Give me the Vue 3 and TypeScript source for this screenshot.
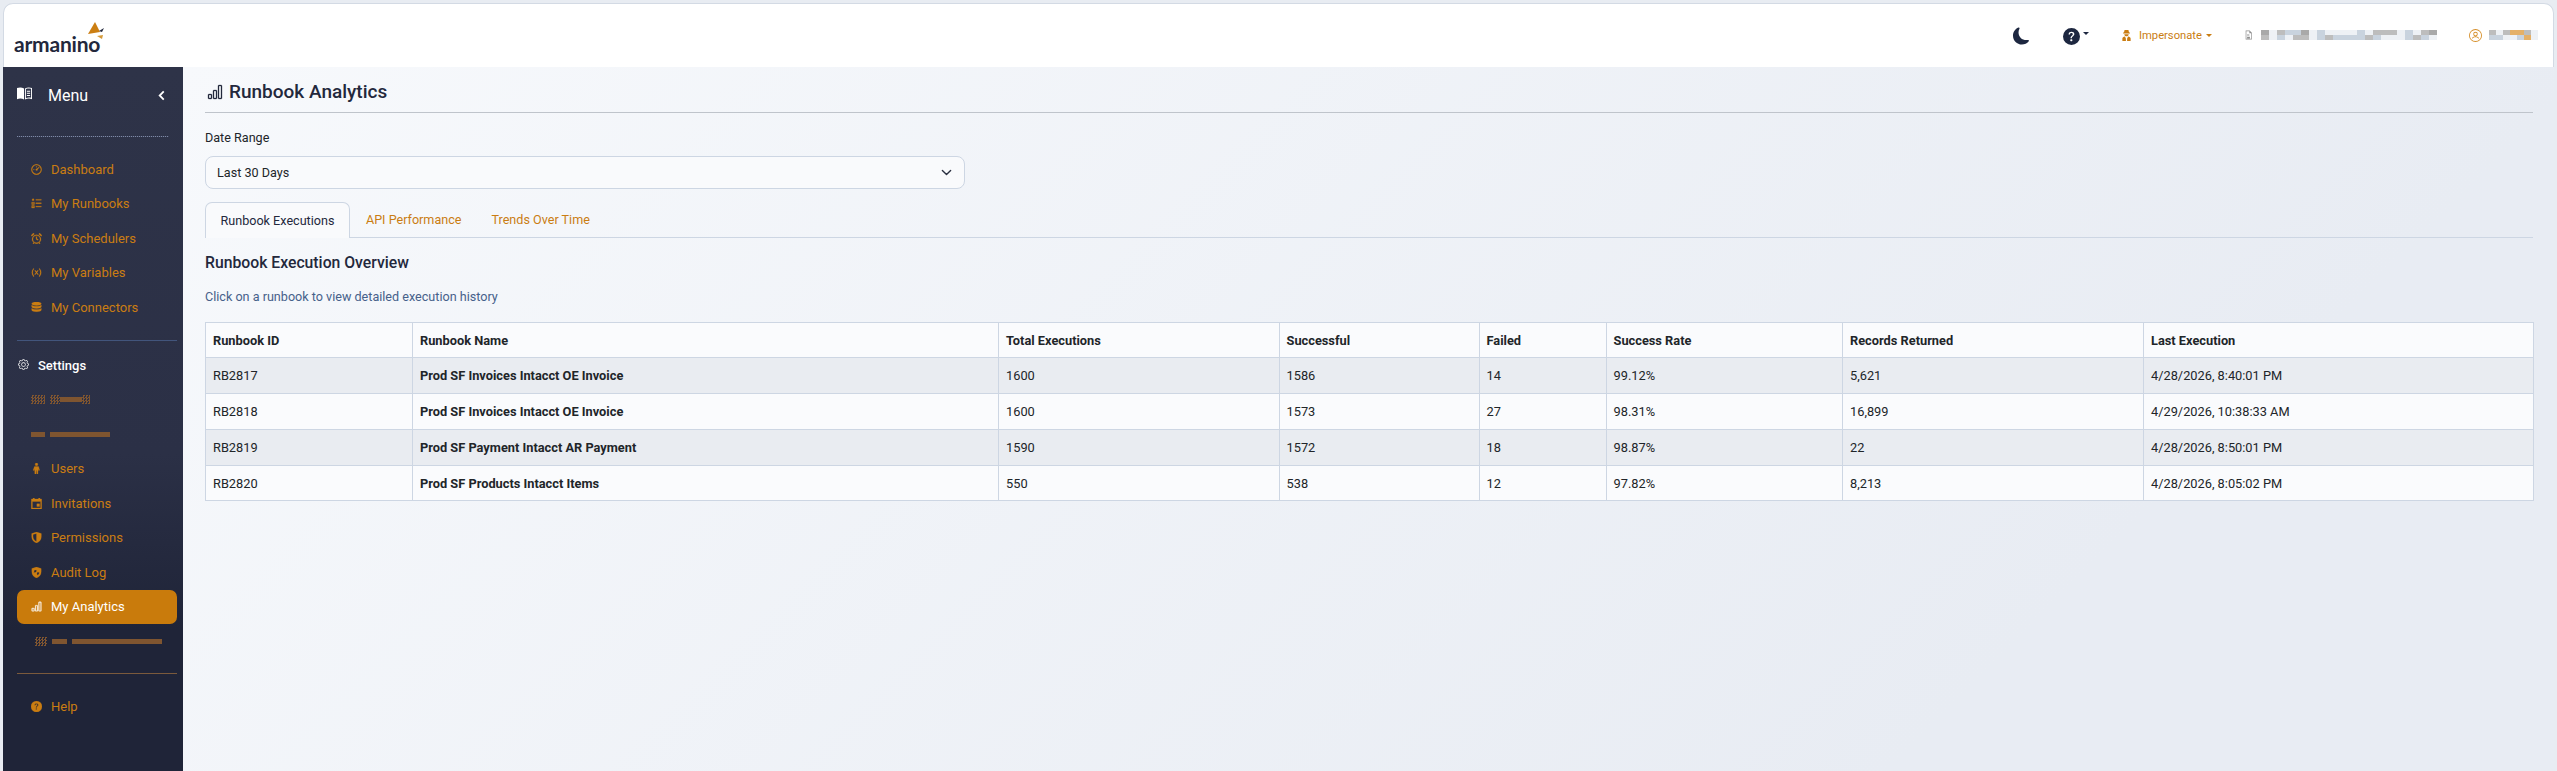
<script setup lang="ts">
interface NavItem {
  label: string
  icon: string
  active?: boolean
}

interface Segment {
  w: number
  kind: 'solid' | 'dither' | 'gap'
}

const barChart =
  'M4 11H2v3h2v-3zm5-4H7v7h2V7zm5-5v12h-2V2h2zm-2-1a1 1 0 0 0-1 1v12a1 1 0 0 0 1 1h2a1 1 0 0 0 1-1V2a1 1 0 0 0-1-1h-2zM6 7a1 1 0 0 1 1-1h2a1 1 0 0 1 1 1v7a1 1 0 0 1-1 1H7a1 1 0 0 1-1-1V7zm-5 4a1 1 0 0 1 1-1h2a1 1 0 0 1 1 1v3a1 1 0 0 1-1 1H2a1 1 0 0 1-1-1v-3z'
const questionFill =
  'M16 8A8 8 0 1 1 0 8a8 8 0 0 1 16 0zM5.496 6.033h.825c.138 0 .248-.113.266-.25.09-.656.54-1.134 1.342-1.134.686 0 1.314.343 1.314 1.168 0 .635-.374.927-.965 1.371-.673.489-1.206 1.06-1.168 1.987l.003.217a.25.25 0 0 0 .25.246h.811a.25.25 0 0 0 .25-.25v-.105c0-.718.273-.927 1.01-1.486.609-.463 1.244-.977 1.244-2.056 0-1.511-1.276-2.241-2.673-2.241-1.267 0-2.655.59-2.75 2.286a.237.237 0 0 0 .241.247zm2.325 6.443c.61 0 1.029-.394 1.029-.927 0-.552-.42-.94-1.029-.94-.584 0-1.009.388-1.009.94 0 .533.425.927 1.01.927z'
const moonFill =
  'M6 .278a.768.768 0 0 1 .08.858 7.208 7.208 0 0 0-.878 3.46c0 4.021 3.278 7.277 7.318 7.277.527 0 1.04-.055 1.533-.16a.787.787 0 0 1 .81.316.733.733 0 0 1-.031.893A8.349 8.349 0 0 1 8.344 16C3.734 16 0 12.286 0 7.71 0 4.266 2.114 1.312 5.124.06A.752.752 0 0 1 6 .278z'
const gear =
  'M8 4.754a3.246 3.246 0 1 0 0 6.492 3.246 3.246 0 0 0 0-6.492zM5.754 8a2.246 2.246 0 1 1 4.492 0 2.246 2.246 0 0 1-4.492 0zM9.796 1.343c-.527-1.79-3.065-1.79-3.592 0l-.094.319a.873.873 0 0 1-1.255.52l-.292-.16c-1.64-.892-3.433.902-2.54 2.541l.159.292a.873.873 0 0 1-.52 1.255l-.319.094c-1.79.527-1.79 3.065 0 3.592l.319.094a.873.873 0 0 1 .52 1.255l-.16.292c-.892 1.64.901 3.434 2.541 2.54l.292-.159a.873.873 0 0 1 1.255.52l.094.319c.527 1.79 3.065 1.79 3.592 0l.094-.319a.873.873 0 0 1 1.255-.52l.292.16c1.64.893 3.434-.902 2.54-2.541l-.159-.292a.873.873 0 0 1 .52-1.255l.319-.094c1.79-.527 1.79-3.065 0-3.592l-.319-.094a.873.873 0 0 1-.52-1.255l.16-.292c.893-1.64-.902-3.433-2.541-2.54l-.292.159a.873.873 0 0 1-1.255-.52l-.094-.319zm-2.633.283c.246-.835 1.428-.835 1.674 0l.094.319a1.873 1.873 0 0 0 2.693 1.115l.291-.16c.764-.415 1.6.42 1.184 1.185l-.159.292a1.873 1.873 0 0 0 1.116 2.692l.318.094c.835.246.835 1.428 0 1.674l-.319.094a1.873 1.873 0 0 0-1.115 2.693l.16.291c.415.764-.42 1.6-1.185 1.184l-.291-.159a1.873 1.873 0 0 0-2.693 1.116l-.094.318c-.246.835-1.428.835-1.674 0l-.094-.319a1.873 1.873 0 0 0-2.692-1.115l-.292.16c-.764.415-1.6-.42-1.184-1.185l.159-.291A1.873 1.873 0 0 0 1.945 8.93l-.319-.094c-.835-.246-.835-1.428 0-1.674l.319-.094A1.873 1.873 0 0 0 3.06 4.377l-.16-.292c-.415-.764.42-1.6 1.185-1.184l.292.159a1.873 1.873 0 0 0 2.692-1.115l.094-.319z'
const dashboard =
  'M8 .5a7.5 7.5 0 1 0 0 15 7.500 7.500 0 0 0 0-15zM1.600 8a6.400 6.400 0 1 1 12.800 0A6.400 6.400 0 0 1 1.600 8zM11.600 4.400l-3 2.600a1.300 1.300 0 1 0 .9 1l2.600-3.100-.5-.5zM3.500 7.500h1.200v1H3.500zM7.500 3.500h1v1.200h-1z'
const tasks =
  'M1.500 2 3 .8 4.500 2v1.500h-3zM1 6h4v3.500H1zm1 1v1.500h2V7zM1 11h4v3.500H1zm1 1v1.500h2V12zM7 2h8v1.200H7zM7 7h8v1.200H7zM7 12h8v1.200H7z'
const alarm =
  'M8 2.500a6.500 6.500 0 0 0-4.200 11.400L2.600 15.200l.9.8 1.300-1.400a6.500 6.500 0 0 0 6.400 0l1.300 1.400.9-.8-1.200-1.300A6.500 6.500 0 0 0 8 2.500zm0 1.300a5.200 5.200 0 1 1 0 10.400A5.200 5.200 0 0 1 8 3.800zM7.400 5.500v3.500l2.600 1.500.6-1L8.600 8.400V5.500zM0 3.500 3.500 0l1.300 1.300L1.300 4.800zM16 3.500 12.500 0l-1.300 1.300 3.500 3.500z'
const variables =
  'M3.600 2C2 4 1.200 6 1.200 8s.8 4 2.400 6l.9-.6C3.100 11.600 2.500 9.800 2.500 8s.6-3.600 2-5.400zM12.400 2l-.9.6c1.400 1.800 2 3.600 2 5.400s-.6 3.600-2 5.400l.9.6c1.600-2 2.400-4 2.400-6s-.8-4-2.400-6zM5.300 5.200l2 2.700-2.200 2.900h1.500L8 8.800l1.400 2h1.500L8.700 7.900l2-2.700H9.200L8 7 6.800 5.200z'
const database =
  'M8 0C4 0 1 1 1 2.500S4 5 8 5s7-1 7-2.500S12 0 8 0zM1 4.500V7c0 1.500 3 2.500 7 2.500S15 8.500 15 7V4.500C14 5.800 11.200 6.300 8 6.300S2 5.800 1 4.500zM1 9.200v2.300C1 13 4 14 8 14s7-1 7-2.500V9.200c-1 1.300-3.800 1.800-7 1.800s-6-.5-7-1.800z'
const person =
  'M8 0a2 2 0 1 1 0 4 2 2 0 0 1 0-4zM5 5.200h6l1.500 5.300-1.400.4-.8-2.400-.3 7.500H8.600L8.300 11h-.6l-.3 5H5.600L5.300 8.500l-.8 2.400-1.400-.4z'
const calendar =
  'M3 0h2v1.500h6V0h2v1.500h2.500V16H.5V1.500H3zM2 5v9.500h12V5zm6.500 3.500h4v4h-4z'
const shieldHalf =
  'M8 0 1 2.300V7c0 4.500 3 7.600 7 9 4-1.400 7-4.500 7-9V2.300zm0 2v11.900C5 12.600 3 10.200 3 7V3.700z'
const shieldGlobe =
  'M8 0 1.200 2.300V7c0 4.500 2.900 7.600 6.800 9 3.900-1.400 6.800-4.500 6.800-9V2.300zM5 4.500h3v2.200L6.200 8H4zm4 3h3l-.3 2.500L9.500 12 8.500 10z'
const bookHalf =
  'M0 2.200C2.200 1.400 5.200 1.300 7.500 2.600V14.300C5.200 13.100 2.200 13.200 0 14zM8.500 2.600C10.800 1.300 13.800 1.400 16 2.200V14c-2.200-.8-5.200-.9-7.500.3zM9.500 3.200v9.700c1.800-.7 3.900-.7 5.500-.3V3c-1.700-.4-3.700-.4-5.500.2zM10.500 5h3.500v1h-3.500zM10.500 7.300h3.500v1h-3.500zM10.500 9.600h3.500v1h-3.500z'
const impersonate =
  'M5.200 0h5.600l.9 3.800H13v1.300H3V3.800h1.300zM4.800 6h6.400c0 1.800-1.400 3.200-3.200 3.200S4.800 7.800 4.800 6zM2 16v-3.600c0-1.600 1.600-2.500 3.600-2.800L7 12l.2 4zM14 16v-3.600c0-1.600-1.600-2.500-3.600-2.800L9 12l-.2 4z'
const fileIcon =
  'M3 0h7l4 4v12H3zm1.200 1.200v13.600h8.600V5H9.500V1.200zM5.500 11h5v3h-5zM5.500 6h4v1h-4zM5.500 8h4v1h-4z'
const personCircle =
  'M8 0a8 8 0 1 0 0 16A8 8 0 0 0 8 0zM1.100 8a6.900 6.900 0 1 1 13.800 0A6.900 6.900 0 0 1 1.100 8zM8 3.500a2.800 2.800 0 1 0 0 5.600 2.800 2.800 0 0 0 0-5.600zM6.300 6.300a1.700 1.700 0 1 1 3.400 0 1.700 1.700 0 0 1-3.400 0zM3.800 12.400c.8-1.500 2.400-2.200 4.200-2.200s3.400.7 4.200 2.200v-1.500C11.200 9.800 9.700 9.200 8 9.200s-3.200.6-4.200 1.700z'

const topNav: NavItem[] = [
  { label: 'Dashboard', icon: dashboard },
  { label: 'My Runbooks', icon: tasks },
  { label: 'My Schedulers', icon: alarm },
  { label: 'My Variables', icon: variables },
  { label: 'My Connectors', icon: database }
]

const maskedOne: Segment[] = [
  { w: 14, kind: 'dither' },
  { w: 5, kind: 'gap' },
  { w: 10, kind: 'dither' },
  { w: 22, kind: 'solid' },
  { w: 8, kind: 'dither' }
]
const maskedTwo: Segment[] = [
  { w: 14, kind: 'solid' },
  { w: 5, kind: 'gap' },
  { w: 60, kind: 'solid' }
]
const maskedThree: Segment[] = [
  { w: 12, kind: 'dither' },
  { w: 5, kind: 'gap' },
  { w: 15, kind: 'solid' },
  { w: 5, kind: 'gap' },
  { w: 90, kind: 'solid' }
]

const settingsNav: NavItem[] = [
  { label: 'Users', icon: person },
  { label: 'Invitations', icon: calendar },
  { label: 'Permissions', icon: shieldHalf },
  { label: 'Audit Log', icon: shieldGlobe },
  { label: 'My Analytics', icon: barChart, active: true }
]

const tabs = ['Runbook Executions', 'API Performance', 'Trends Over Time']

const columns = [
  { title: 'Runbook ID', width: 207 },
  { title: 'Runbook Name', width: 586 },
  { title: 'Total Executions', width: 280.5 },
  { title: 'Successful', width: 200 },
  { title: 'Failed', width: 127 },
  { title: 'Success Rate', width: 236.5 },
  { title: 'Records Returned', width: 301 },
  { title: 'Last Execution', width: 390 }
]

const rows = [
  ['RB2817', 'Prod SF Invoices Intacct OE Invoice', '1600', '1586', '14', '99.12%', '5,621', '4/28/2026, 8:40:01 PM'],
  ['RB2818', 'Prod SF Invoices Intacct OE Invoice', '1600', '1573', '27', '98.31%', '16,899', '4/29/2026, 10:38:33 AM'],
  ['RB2819', 'Prod SF Payment Intacct AR Payment', '1590', '1572', '18', '98.87%', '22', '4/28/2026, 8:50:01 PM'],
  ['RB2820', 'Prod SF Products Intacct Items', '550', '538', '12', '97.82%', '8,213', '4/28/2026, 8:05:02 PM']
]

// Deterministic mosaic for the masked names in the header
const mosaic = (count: number, seed: number, tint: string) =>
  Array.from({ length: count }, (_, i) => {
    const n = (i * 37 + seed * 17 + (i * i) % 23) % 11
    if (n < 3) return '#eef1f5'
    if (n < 7) return '#c9d3de'
    if (n === 7) return tint
    return '#bdbdbd'
  })

const companyCells = mosaic(44, 3, '#a9a9a9')
const userCells = mosaic(14, 5, '#e5b067')
</script>

<template>
  <div class="page">
    <header class="topbar">
      <div class="logo">
        <span class="logo-word">armanino</span>
        <svg class="logo-mark" viewBox="0 0 18 18">
          <path d="M8 1 1 13 13 11z" fill="#cb7e12" />
          <path d="M10 15 16 14 15 18z" fill="#d49a3a" />
          <path d="M12 10 17 7 15 11z" fill="#23283c" />
        </svg>
      </div>
      <div class="topbar-tools">
        <svg class="tool-moon" viewBox="0 0 16 16"><path :d="moonFill" /></svg>
        <div class="tool-help">
          <svg viewBox="0 0 16 16"><path :d="questionFill" /></svg>
          <i class="caret caret--dark"></i>
        </div>
        <div class="tool-impersonate">
          <svg viewBox="0 0 16 16"><path :d="impersonate" /></svg>
          <span>Impersonate</span>
          <i class="caret"></i>
        </div>
        <div class="tool-company">
          <svg viewBox="0 0 16 16"><path :d="fileIcon" /></svg>
          <div class="masked masked--company">
            <b v-for="(c, i) in companyCells" :key="i" :style="{ background: c }"></b>
          </div>
        </div>
        <div class="tool-user">
          <svg viewBox="0 0 16 16"><path :d="personCircle" /></svg>
          <div class="masked masked--user">
            <b v-for="(c, i) in userCells" :key="i" :style="{ background: c }"></b>
          </div>
        </div>
      </div>
    </header>

    <div class="body">
      <aside class="sidebar">
        <div class="menu-head">
          <svg class="menu-book" viewBox="0 0 16 16"><path :d="bookHalf" fill-rule="evenodd" /></svg>
          <span class="menu-title">Menu</span>
          <svg class="menu-chevron" viewBox="0 0 10 12">
            <path d="M7.500 1.500 3 6l4.500 4.500" fill="none" stroke="currentColor" stroke-width="2" />
          </svg>
        </div>
        <hr class="rule rule--dotted" />

        <nav class="nav nav--top">
          <a v-for="item in topNav" :key="item.label" class="nav-item">
            <svg viewBox="0 0 16 16"><path :d="item.icon" fill-rule="evenodd" /></svg>
            <span>{{ item.label }}</span>
          </a>
        </nav>
        <hr class="rule rule--blue" />

        <div class="settings-head">
          <svg viewBox="0 0 16 16"><path :d="gear" fill-rule="evenodd" /></svg>
          <span>Settings</span>
        </div>
        <nav class="nav">
          <div class="nav-item nav-item--masked">
            <i
              v-for="(s, i) in maskedOne"
              :key="i"
              :class="`smudge smudge--${s.kind}`"
              :style="{ width: s.w + 'px' }"
            ></i>
          </div>
          <div class="nav-item nav-item--masked">
            <i
              v-for="(s, i) in maskedTwo"
              :key="i"
              :class="`smudge smudge--${s.kind}`"
              :style="{ width: s.w + 'px' }"
            ></i>
          </div>
          <a
            v-for="item in settingsNav"
            :key="item.label"
            class="nav-item"
            :class="{ 'nav-item--active': item.active }"
          >
            <svg viewBox="0 0 16 16"><path :d="item.icon" fill-rule="evenodd" /></svg>
            <span>{{ item.label }}</span>
          </a>
          <div class="nav-item nav-item--masked nav-item--wide">
            <i
              v-for="(s, i) in maskedThree"
              :key="i"
              :class="`smudge smudge--${s.kind}`"
              :style="{ width: s.w + 'px' }"
            ></i>
          </div>
        </nav>
        <hr class="rule rule--amber" />

        <a class="nav-item nav-item--help">
          <svg viewBox="0 0 16 16"><path :d="questionFill" /></svg>
          <span>Help</span>
        </a>
      </aside>

      <main class="content">
        <div class="page-title">
          <svg viewBox="0 0 16 16"><path :d="barChart" /></svg>
          <h1>Runbook Analytics</h1>
        </div>

        <label class="field-label">Date Range</label>
        <div class="select">
          <span>Last 30 Days</span>
          <svg viewBox="0 0 16 16">
            <path d="M2 5l6 6 6-6" fill="none" stroke="currentColor" stroke-width="2" stroke-linecap="round" stroke-linejoin="round" />
          </svg>
        </div>

        <div class="tabs">
          <a v-for="(tab, i) in tabs" :key="tab" class="tab" :class="{ 'tab--active': i === 0 }">{{ tab }}</a>
        </div>

        <h2 class="section-title">Runbook Execution Overview</h2>
        <p class="hint">Click on a runbook to view detailed execution history</p>

        <table class="grid">
          <colgroup>
            <col v-for="col in columns" :key="col.title" :style="{ width: col.width + 'px' }" />
          </colgroup>
          <thead>
            <tr>
              <th v-for="col in columns" :key="col.title">{{ col.title }}</th>
            </tr>
          </thead>
          <tbody>
            <tr v-for="row in rows" :key="row[0]">
              <td v-for="(cell, i) in row" :key="i" :class="{ strong: i === 1 }">{{ cell }}</td>
            </tr>
          </tbody>
        </table>
      </main>
    </div>
  </div>
</template>

<style>
html,
body {
  margin: 0;
  background: #e8ecf2;
}
</style>

<style scoped>
.page {
  height: 771px;
  width: 2557px;
  overflow: hidden;
  box-sizing: border-box;
  padding: 3px 3px 0;
  display: flex;
  flex-direction: column;
  font-family: Roboto, "Liberation Sans", sans-serif;
  font-size: 13px;
  color: #212529;
  background: #e8ecf2;
}

/* Верхняя панель */
.topbar {
  height: 64px;
  flex: none;
  display: flex;
  align-items: center;
  justify-content: space-between;
  background: #fff;
  border-radius: 10px 10px 0 0;
  box-shadow: inset 0 1px 0 #d3dae4, inset 1px 0 0 #d3dae4, inset -1px 0 0 #d3dae4;
}

.logo {
  display: flex;
  align-items: flex-end;
  margin-left: 11px;
  position: relative;
  height: 40px;
}

.logo-word {
  font-family: Lato, sans-serif;
  font-size: 21px;
  font-weight: 700;
  letter-spacing: -0.2px;
  line-height: 28px;
  margin-bottom: -3px;
  color: #23283c;
}

.logo-mark {
  position: absolute;
  left: 73px;
  top: 6px;
  width: 18px;
  height: 18px;
}

.topbar-tools {
  display: flex;
  align-items: center;
  height: 100%;
  padding-right: 5px;
}

.tool-moon {
  width: 17px;
  height: 18px;
  fill: #1d2740;
  margin: 2px 33px 0 0;
}

.tool-help {
  display: flex;
  align-items: center;
  width: 58px;
  margin-top: 2px;
}

.tool-help svg {
  width: 17px;
  height: 17px;
  fill: #1d2740;
}

.caret {
  display: inline-block;
  width: 0;
  height: 0;
  border-left: 3.5px solid transparent;
  border-right: 3.5px solid transparent;
  border-top: 3.5px solid #ca7d12;
  margin-left: 4px;
}

.caret--dark {
  border-top-color: #1d2740;
  margin-top: -6px;
  margin-left: 3px;
}

.tool-impersonate {
  display: flex;
  align-items: center;
  font-size: 11.2px;
  color: #ca7d12;
  width: 123px;
}

.tool-impersonate svg {
  width: 11px;
  height: 13px;
  fill: #ca7d12;
  margin-right: 7px;
}

.tool-company {
  display: flex;
  align-items: center;
  width: 225px;
}

.tool-company svg {
  width: 9px;
  height: 12px;
  fill: #8d8d8d;
  margin-right: 8px;
}

.tool-user {
  display: flex;
  align-items: center;
  width: 80px;
}

.tool-user svg {
  width: 13px;
  height: 13px;
  fill: #d68f2a;
  margin-right: 7px;
}

.masked {
  display: grid;
  grid-auto-rows: 5px;
}

.masked b {
  display: block;
}

.masked--company {
  width: 176px;
  grid-template-columns: repeat(22, 8px);
}

.masked--user {
  width: 49px;
  grid-template-columns: repeat(7, 7px);
}

/* Основная часть */
.body {
  flex: 1;
  display: flex;
  min-height: 0;
}

.sidebar {
  width: 180px;
  flex: none;
  box-sizing: border-box;
  padding: 0 6px 0 14px;
  background: linear-gradient(180deg, #2e3348 0%, #2b3046 55%, #1f2438 80%, #1f2438 100%);
}

.menu-head {
  display: flex;
  align-items: center;
  height: 56px;
  color: #fff;
  padding-right: 10px;
}

.menu-book {
  width: 15px;
  height: 15px;
  fill: #fff;
  margin-top: -3px;
}

.menu-title {
  margin-left: 16px;
  font-size: 16px;
  flex: 1;
}

.menu-chevron {
  width: 9px;
  height: 11px;
  margin-right: 1px;
}

.rule {
  margin: 0;
  border: 0;
  height: 1px;
}

.rule--dotted {
  width: 152px;
  margin-top: 13px;
  background: repeating-linear-gradient(90deg, #7e8aa6 0 1px, #3b4058 1px 2px);
}

.rule--blue {
  margin-top: 15px;
  background: #42557c;
}

.rule--amber {
  margin-top: 14px;
  background: #7b5a3c;
}

.nav--top {
  margin-top: 15px;
}

.nav-item {
  display: flex;
  align-items: center;
  height: 34.5px;
  padding-left: 14px;
  box-sizing: border-box;
  color: #ca7d12;
  border-radius: 7px;
}

.nav-item svg {
  width: 11px;
  height: 11px;
  fill: #ca7d12;
  stroke: #ca7d12;
  stroke-width: 0.4;
  margin-right: 9px;
  flex: none;
}

.nav-item--active {
  background: #c97b0c;
  color: #fff;
}

.nav-item--active svg {
  fill: #fff;
  stroke: #fff;
}

.nav-item--wide {
  padding-left: 18px;
}

.nav-item--help {
  margin-top: 16px;
}

.smudge {
  display: block;
  height: 5px;
  flex: none;
}

.smudge--solid {
  background: #7f5530;
}

.smudge--dither {
  height: 9px;
  background: repeating-conic-gradient(#7f5530 0 25%, transparent 0 50%) 0 0 / 3px 3px;
}

.settings-head {
  display: flex;
  align-items: center;
  height: 24px;
  margin-top: 13px;
  color: #fff;
  font-weight: 500;
  margin-bottom: 5px;
}

.settings-head svg {
  width: 11px;
  height: 11px;
  fill: #fff;
  margin: -2px 9px 0 1px;
}

.content {
  flex: 1;
  min-width: 0;
  box-sizing: border-box;
  padding: 0 21px 0 22px;
  font-size: 12.6px;
  background: linear-gradient(135deg, #f7f9fc 0, #e8ecf3 1704px);
}

.page-title {
  display: flex;
  align-items: center;
  height: 46px;
  box-sizing: border-box;
  padding-top: 4px;
  border-bottom: 1px solid #bfc4cb;
}

.page-title svg {
  width: 16px;
  height: 16px;
  fill: #23283c;
  stroke: #23283c;
  stroke-width: 0.3;
  margin: 0 6px 0 2px;
}

.page-title h1 {
  margin: 0;
  font-size: 19px;
  font-weight: 500;
  color: #23283c;
}

.field-label {
  display: block;
  margin-top: 16px;
  line-height: 18px;
}

.select {
  width: 760px;
  height: 33px;
  box-sizing: border-box;
  margin-top: 9px;
  padding: 0 12px 0 11px;
  display: flex;
  align-items: center;
  justify-content: space-between;
  background: #f9fafc;
  border: 1px solid #cdd6e3;
  border-radius: 8px;
}

.select svg {
  width: 11px;
  height: 11px;
  color: #2a2f40;
}

.tabs {
  display: flex;
  margin-top: 13px;
  height: 36px;
  box-sizing: border-box;
  border-bottom: 1px solid #cdd6e3;
}

.tab {
  display: flex;
  align-items: center;
  padding: 0 15px;
  color: #ca7d12;
}

.tab--active {
  color: #23283c;
  background: #f9fafc;
  border: 1px solid #cdd6e3;
  border-bottom: 0;
  border-radius: 7px 7px 0 0;
  height: 36px;
  box-sizing: border-box;
  padding: 0 14.5px;
  margin-right: 1px;
}

.section-title {
  margin: 15px 0 0;
  font-size: 15.75px;
  font-weight: 500;
  line-height: 20px;
  color: #23283c;
}

.hint {
  margin: 15px 0 0;
  line-height: 18px;
  color: #46618a;
}

.grid {
  margin-top: 16px;
  width: 2328px;
  table-layout: fixed;
  border-collapse: collapse;
  background: #fafbfd;
  border: 1px solid #cdd6e3;
  font-size: 12.8px;
}

.grid th,
.grid td {
  box-sizing: border-box;
  padding: 0 0 0 7px;
  text-align: left;
  border: 1px solid #cdd6e3;
}

.grid th {
  height: 35px;
  font-weight: 700;
}

.grid td {
  height: 36px;
}

.grid tbody tr:last-child td {
  height: 35px;
}

.grid tbody tr:nth-child(odd) td {
  background: #e9ecf1;
}

.grid td.strong {
  font-weight: 700;
}
</style>
